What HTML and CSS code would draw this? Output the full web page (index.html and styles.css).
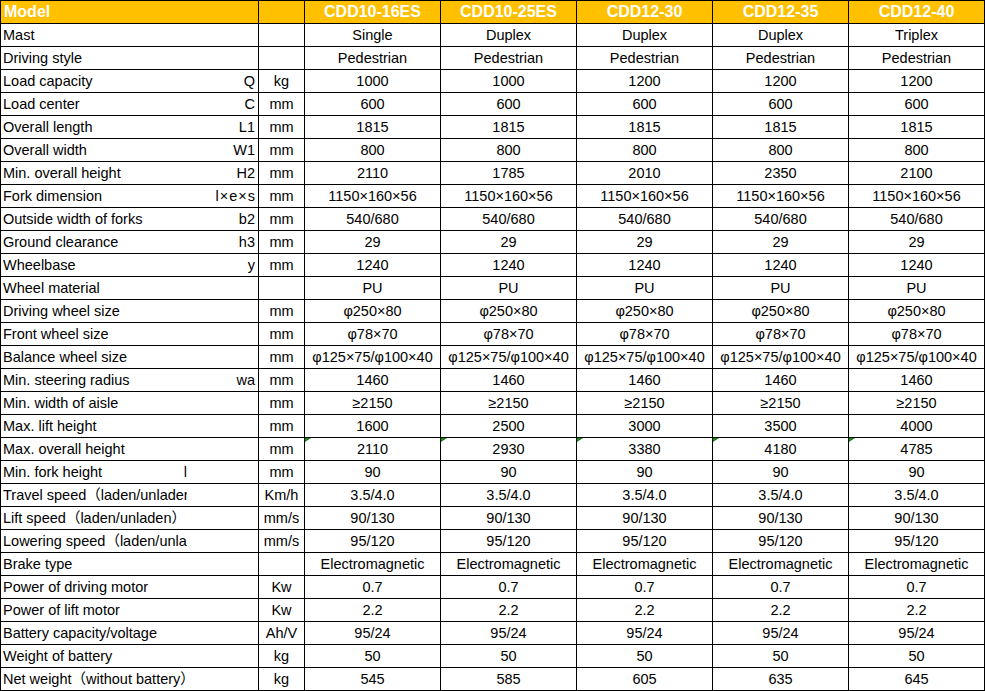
FILE: index.html
```html
<!DOCTYPE html>
<html lang="en">
<head>
<meta charset="utf-8">
<title>CDD specifications</title>
<link rel="stylesheet" href="styles.css">
</head>
<body>
<table class="spec">
  <colgroup>
    <col class="c-label"><col class="c-unit"><col class="c-data"><col class="c-data"><col class="c-data"><col class="c-data"><col class="c-data">
  </colgroup>
  <thead>
    <tr>
      <th class="h-model">Model</th><th></th>
      <th>CDD10-16ES</th><th>CDD10-25ES</th><th>CDD12-30</th><th>CDD12-35</th><th>CDD12-40</th>
    </tr>
  </thead>
  <tbody>
    <tr><td class="lbl"><div class="lw"><span class="nm">Mast</span><span class="sy"></span></div></td><td class="u"></td><td>Single</td><td>Duplex</td><td>Duplex</td><td>Duplex</td><td>Triplex</td></tr>
    <tr><td class="lbl"><div class="lw"><span class="nm">Driving style</span><span class="sy"></span></div></td><td class="u"></td><td>Pedestrian</td><td>Pedestrian</td><td>Pedestrian</td><td>Pedestrian</td><td>Pedestrian</td></tr>
    <tr><td class="lbl"><div class="lw"><span class="nm">Load capacity</span><span class="sy">Q</span></div></td><td class="u">kg</td><td>1000</td><td>1000</td><td>1200</td><td>1200</td><td>1200</td></tr>
    <tr><td class="lbl"><div class="lw"><span class="nm">Load center</span><span class="sy">C</span></div></td><td class="u">mm</td><td>600</td><td>600</td><td>600</td><td>600</td><td>600</td></tr>
    <tr><td class="lbl"><div class="lw"><span class="nm">Overall length</span><span class="sy">L1</span></div></td><td class="u">mm</td><td>1815</td><td>1815</td><td>1815</td><td>1815</td><td>1815</td></tr>
    <tr><td class="lbl"><div class="lw"><span class="nm">Overall width</span><span class="sy">W1</span></div></td><td class="u">mm</td><td>800</td><td>800</td><td>800</td><td>800</td><td>800</td></tr>
    <tr><td class="lbl"><div class="lw"><span class="nm">Min. overall height</span><span class="sy">H2</span></div></td><td class="u">mm</td><td>2110</td><td>1785</td><td>2010</td><td>2350</td><td>2100</td></tr>
    <tr><td class="lbl"><div class="lw"><span class="nm">Fork dimension</span><span class="sy sm">l×e×s</span></div></td><td class="u">mm</td><td>1150×160×56</td><td>1150×160×56</td><td>1150×160×56</td><td>1150×160×56</td><td>1150×160×56</td></tr>
    <tr><td class="lbl"><div class="lw"><span class="nm">Outside width of forks</span><span class="sy">b2</span></div></td><td class="u">mm</td><td>540/680</td><td>540/680</td><td>540/680</td><td>540/680</td><td>540/680</td></tr>
    <tr><td class="lbl"><div class="lw"><span class="nm">Ground clearance</span><span class="sy">h3</span></div></td><td class="u">mm</td><td>29</td><td>29</td><td>29</td><td>29</td><td>29</td></tr>
    <tr><td class="lbl"><div class="lw"><span class="nm">Wheelbase</span><span class="sy">y</span></div></td><td class="u">mm</td><td>1240</td><td>1240</td><td>1240</td><td>1240</td><td>1240</td></tr>
    <tr><td class="lbl"><div class="lw"><span class="nm">Wheel material</span><span class="sy"></span></div></td><td class="u"></td><td>PU</td><td>PU</td><td>PU</td><td>PU</td><td>PU</td></tr>
    <tr><td class="lbl"><div class="lw"><span class="nm">Driving wheel size</span><span class="sy"></span></div></td><td class="u">mm</td><td>φ250×80</td><td>φ250×80</td><td>φ250×80</td><td>φ250×80</td><td>φ250×80</td></tr>
    <tr><td class="lbl"><div class="lw"><span class="nm">Front wheel size</span><span class="sy"></span></div></td><td class="u">mm</td><td>φ78×70</td><td>φ78×70</td><td>φ78×70</td><td>φ78×70</td><td>φ78×70</td></tr>
    <tr><td class="lbl"><div class="lw"><span class="nm">Balance wheel size</span><span class="sy"></span></div></td><td class="u">mm</td><td>φ125×75/φ100×40</td><td>φ125×75/φ100×40</td><td>φ125×75/φ100×40</td><td>φ125×75/φ100×40</td><td>φ125×75/φ100×40</td></tr>
    <tr><td class="lbl"><div class="lw"><span class="nm">Min. steering radius</span><span class="sy">wa</span></div></td><td class="u">mm</td><td>1460</td><td>1460</td><td>1460</td><td>1460</td><td>1460</td></tr>
    <tr><td class="lbl"><div class="lw"><span class="nm">Min. width of aisle</span><span class="sy"></span></div></td><td class="u">mm</td><td>≥2150</td><td>≥2150</td><td>≥2150</td><td>≥2150</td><td>≥2150</td></tr>
    <tr><td class="lbl"><div class="lw"><span class="nm">Max. lift height</span><span class="sy"></span></div></td><td class="u">mm</td><td>1600</td><td>2500</td><td>3000</td><td>3500</td><td>4000</td></tr>
    <tr><td class="lbl"><div class="lw"><span class="nm">Max. overall height</span><span class="sy"></span></div></td><td class="u">mm</td><td class="flag">2110</td><td class="flag">2930</td><td class="flag">3380</td><td class="flag">4180</td><td class="flag">4785</td></tr>
    <tr><td class="lbl"><div class="lw"><span class="nm split"><span>Min. fork height</span><span>l</span></span><span class="sy"></span></div></td><td class="u">mm</td><td>90</td><td>90</td><td>90</td><td>90</td><td>90</td></tr>
    <tr><td class="lbl"><div class="lw"><span class="nm">Travel speed（laden/unladen）</span><span class="sy"></span></div></td><td class="u">Km/h</td><td>3.5/4.0</td><td>3.5/4.0</td><td>3.5/4.0</td><td>3.5/4.0</td><td>3.5/4.0</td></tr>
    <tr><td class="lbl"><div class="lw"><span class="nm full">Lift speed（laden/unladen）</span><span class="sy"></span></div></td><td class="u">mm/s</td><td>90/130</td><td>90/130</td><td>90/130</td><td>90/130</td><td>90/130</td></tr>
    <tr><td class="lbl"><div class="lw"><span class="nm">Lowering speed（laden/unladen）</span><span class="sy"></span></div></td><td class="u">mm/s</td><td>95/120</td><td>95/120</td><td>95/120</td><td>95/120</td><td>95/120</td></tr>
    <tr><td class="lbl"><div class="lw"><span class="nm">Brake type</span><span class="sy"></span></div></td><td class="u"></td><td>Electromagnetic</td><td>Electromagnetic</td><td>Electromagnetic</td><td>Electromagnetic</td><td>Electromagnetic</td></tr>
    <tr><td class="lbl"><div class="lw"><span class="nm">Power of driving motor</span><span class="sy"></span></div></td><td class="u">Kw</td><td>0.7</td><td>0.7</td><td>0.7</td><td>0.7</td><td>0.7</td></tr>
    <tr><td class="lbl"><div class="lw"><span class="nm">Power of lift motor</span><span class="sy"></span></div></td><td class="u">Kw</td><td>2.2</td><td>2.2</td><td>2.2</td><td>2.2</td><td>2.2</td></tr>
    <tr><td class="lbl"><div class="lw"><span class="nm">Battery capacity/voltage</span><span class="sy"></span></div></td><td class="u">Ah/V</td><td>95/24</td><td>95/24</td><td>95/24</td><td>95/24</td><td>95/24</td></tr>
    <tr><td class="lbl"><div class="lw"><span class="nm">Weight of battery</span><span class="sy"></span></div></td><td class="u">kg</td><td>50</td><td>50</td><td>50</td><td>50</td><td>50</td></tr>
    <tr><td class="lbl"><div class="lw"><span class="nm full">Net weight（without battery）</span><span class="sy"></span></div></td><td class="u">kg</td><td>545</td><td>585</td><td>605</td><td>635</td><td>645</td></tr>
  </tbody>
</table>
</body>
</html>
```
FILE: styles.css
```css
html, body {
  margin: 0;
  padding: 0;
  background: #ffffff;
}

.spec {
  width: 985px;
  table-layout: fixed;
  border-collapse: separate;
  border-spacing: 1px;
  background: #000000;
  font-family: "Liberation Sans", Arial, "Noto Sans CJK SC", sans-serif;
  font-size: 14.5px;
  color: #000000;
}

.c-label { width: 257px; }
.c-unit { width: 45px; }
.c-data { width: 135px; }

.spec th,
.spec td {
  height: 22px;
  line-height: 22px;
  padding: 0;
  white-space: nowrap;
  overflow: hidden;
  text-align: center;
  vertical-align: middle;
  background: #ffffff;
}

.spec th {
  background: #ffc000;
  color: #ffffff;
  font-weight: bold;
  font-size: 16px;
}

.spec th.h-model {
  text-align: left;
  padding-left: 3px;
}

.spec td.lbl {
  text-align: left;
}

.lw {
  display: flex;
  height: 22px;
  padding: 0 2px 0 2px;
}

.nm {
  flex: 0 0 184px;
  overflow: hidden;
  white-space: nowrap;
}

.nm.full {
  overflow: visible;
}

.nm.split {
  display: flex;
  justify-content: space-between;
}

.sy {
  flex: 1 1 auto;
  text-align: right;
  padding-right: 1px;
}

.sy.sm {
  letter-spacing: 1px;
  margin-right: -1px;
}

.spec td.flag {
  position: relative;
}

.spec td.flag::before {
  content: "";
  position: absolute;
  top: 0;
  left: 0;
  width: 0;
  height: 0;
  border-top: 4px solid #138a13;
  border-right: 6px solid transparent;
}
```
